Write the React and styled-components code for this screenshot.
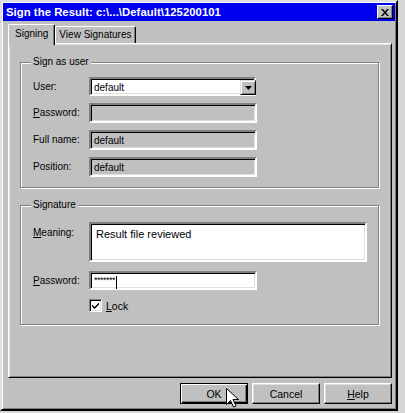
import React from 'react'
import styled, { createGlobalStyle } from 'styled-components'

const Global = createGlobalStyle`
    body {
        margin: 0;
        background: #d6d6d6;
        font-family: 'Liberation Sans', Arial, sans-serif;
    }
`

const Window = styled.div`
    box-sizing: border-box;
    width: 398px;
    height: 411px;
    background: #c0c0c0;
    border: 2px solid;
    border-color: #dfdfdf #000 #000 #dfdfdf;
    box-shadow: inset 1px 1px #fff, inset -1px -1px #808080;
    padding: 1px;
    display: flex;
    flex-direction: column;
`

const TitleBar = styled.div`
    height: 18px;
    background: #0000ee;
    display: flex;
    align-items: center;
    justify-content: space-between;
    padding: 0 2px 0 3px;
    color: #fff;
    font-weight: bold;
    font-size: 11.3px;
    letter-spacing: 0.05px;
`

const CloseBox = styled.div`
    box-sizing: border-box;
    width: 16px;
    height: 14px;
    background: #c0c0c0;
    border: 1px solid;
    border-color: #fff #000 #000 #fff;
    box-shadow: inset -1px -1px #808080;
    display: flex;
    align-items: center;
    justify-content: center;
`

const Body = styled.div`
    flex: 1;
    display: flex;
    flex-direction: column;
    padding: 2px 3px 0 5px;
`

const TabRow = styled.div`
    display: flex;
    align-items: flex-end;
    height: 20px;
    font-size: 10px;
`

const Tab = styled.div`
    box-sizing: border-box;
    position: relative;
    z-index: ${p => (p.active ? 2 : 1)};
    height: ${p => (p.active ? '21px' : '17px')};
    margin-bottom: ${p => (p.active ? '-2px' : '0')};
    padding: ${p => (p.active ? '3px 6px 0 6px' : '2px 4px 0 3px')};
    background: #c0c0c0;
    border: 1px solid;
    border-bottom: none;
    border-color: #fff #000 #000 #fff;
    border-radius: 2px 2px 0 0;
    box-shadow: inset -1px 0 #808080;
    color: #000;
`

const Panel = styled.div`
    box-sizing: border-box;
    height: 335px;
    border: 1px solid;
    border-color: #fff #000 #000 #fff;
    box-shadow: inset 1px 1px #dfdfdf, inset -1px -1px #808080;
    padding: 18px 0 0 11px;
`

const Group = styled.div`
    box-sizing: border-box;
    position: relative;
    width: 359px;
    height: ${p => p.h}px;
    margin-top: ${p => p.mt || 0}px;
    border: 1px solid #808080;
    box-shadow: 1px 1px #fff, inset 1px 1px #fff;
    padding: ${p => p.pt}px 0 0 12px;
`

const Legend = styled.span`
    position: absolute;
    top: -7px;
    left: 10px;
    padding: 0 2px;
    background: #c0c0c0;
    font-size: 10px;
    line-height: 12px;
`

const Form = styled.div`
    display: grid;
    grid-template-columns: 56px auto;
    row-gap: ${p => p.gap}px;
    align-items: start;
    justify-items: start;
    font-size: 10px;
`

const Label = styled.div`
    line-height: 12px;
    padding-top: ${p => p.pt || 4}px;
`

const Field = styled.div`
    box-sizing: border-box;
    width: ${p => p.w}px;
    height: ${p => p.h}px;
    background: ${p => (p.off ? '#c0c0c0' : '#fff')};
    border: 2px solid;
    border-color: #808080 #fff #fff #808080;
    box-shadow: inset 1px 1px #000, inset -1px -1px #dfdfdf;
    padding: ${p => p.pad || '3px 3px'};
    font-size: ${p => p.fs || 10}px;
    line-height: 12px;
    display: flex;
    align-items: flex-start;
    color: #000;
`

const ComboText = styled.span`
    flex: 1;
`

const DropBtn = styled.div`
    box-sizing: border-box;
    width: 16px;
    height: 15px;
    margin: -2px -2px 0 0;
    background: #c0c0c0;
    border: 1px solid;
    border-color: #dfdfdf #000 #000 #dfdfdf;
    box-shadow: inset 1px 1px #fff, inset -1px -1px #808080;
    display: flex;
    align-items: center;
    justify-content: center;
`

const Stars = styled.span`
    font-size: 9px;
    line-height: 8px;
    letter-spacing: -0.5px;
`

const Caret = styled.span`
    display: inline-block;
    width: 1px;
    height: 13px;
    background: #000;
    margin-left: 1px;
`

const CheckRow = styled.div`
    grid-column: 2;
    display: flex;
    align-items: center;
    gap: 4px;
    font-size: 10.5px;
`

const CheckBox = styled.div`
    box-sizing: border-box;
    width: 13px;
    height: 13px;
    background: #fff;
    border: 1px solid;
    border-color: #808080 #fff #fff #808080;
    box-shadow: inset 1px 1px #000, inset -1px -1px #dfdfdf;
    display: flex;
    align-items: center;
    justify-content: center;
`

const ButtonRow = styled.div`
    display: flex;
    justify-content: flex-end;
    gap: 4px;
    margin-top: 5px;
`

const Button = styled.div`
    box-sizing: border-box;
    position: relative;
    width: 68px;
    height: 21px;
    background: #c0c0c0;
    border: 1px solid;
    border-color: ${p => (p.def ? '#000' : '#fff #000 #000 #fff')};
    box-shadow: ${p =>
        p.def
            ? 'inset 1px 1px #fff, inset -1px -1px #000, inset -2px -2px #808080'
            : 'inset -1px -1px #808080, inset 1px 1px #dfdfdf'};
    display: flex;
    align-items: center;
    justify-content: center;
    font-size: 10.5px;
    color: #000;
`

const Pointer = styled.svg`
    position: absolute;
    left: 45px;
    top: 4px;
`

const App = () => {
    return (
        <Window>
            <Global />
            <TitleBar>
                <span>Sign the Result: c:\...\Default\125200101</span>
                <CloseBox>
                    <svg width="8" height="7" viewBox="0 0 8 7">
                        <path d="M0 0h2l2 2.5L6 0h2L5 3.5 8 7H6L4 4.5 2 7H0l3-3.5z" fill="#000" />
                    </svg>
                </CloseBox>
            </TitleBar>
            <Body>
                <TabRow>
                    <Tab active>Signing</Tab>
                    <Tab>View Signatures</Tab>
                </TabRow>
                <Panel>
                    <Group h={126} pt={14}>
                        <Legend>Sign as user</Legend>
                        <Form gap={7}>
                            <Label>User:</Label>
                            <Field w={167} h={19} pad="3px 0 0 3px">
                                <ComboText>default</ComboText>
                                <DropBtn>
                                    <svg width="7" height="4" viewBox="0 0 7 4">
                                        <path d="M0 0h7L3.5 4z" fill="#000" />
                                    </svg>
                                </DropBtn>
                            </Field>
                            <Label><u>P</u>assword:</Label>
                            <Field w={168} h={20} off />
                            <Label>Full name:</Label>
                            <Field w={168} h={20} off>default</Field>
                            <Label>Position:</Label>
                            <Field w={168} h={20} off>default</Field>
                        </Form>
                    </Group>
                    <Group h={120} pt={16} mt={17}>
                        <Legend>Signature</Legend>
                        <Form gap={9}>
                            <Label pt={5}><u>M</u>eaning:</Label>
                            <Field w={278} h={40} fs={11} pad="4px 5px">Result file reviewed</Field>
                            <Label><u>P</u>assword:</Label>
                            <Field w={168} h={19} pad="3px 3px">
                                <Stars>*******</Stars>
                                <Caret />
                            </Field>
                            <CheckRow>
                                <CheckBox>
                                    <svg width="7" height="7" viewBox="0 0 7 7">
                                        <path d="M0 2.5l2.5 2.5L7 0.5v2L2.5 7 0 4.5z" fill="#000" />
                                    </svg>
                                </CheckBox>
                                <span><u>L</u>ock</span>
                            </CheckRow>
                        </Form>
                    </Group>
                </Panel>
                <ButtonRow>
                    <Button def>
                        OK
                        <Pointer width="13" height="20" viewBox="0 0 13 20">
                            <path d="M0.5 0.5v16l4-4 3 6.5 2.5-1-3-6.5h5.5z" fill="#fff" stroke="#000" strokeWidth="1" />
                        </Pointer>
                    </Button>
                    <Button>Cancel</Button>
                    <Button><span><u>H</u>elp</span></Button>
                </ButtonRow>
            </Body>
        </Window>
    )
}

export default App
